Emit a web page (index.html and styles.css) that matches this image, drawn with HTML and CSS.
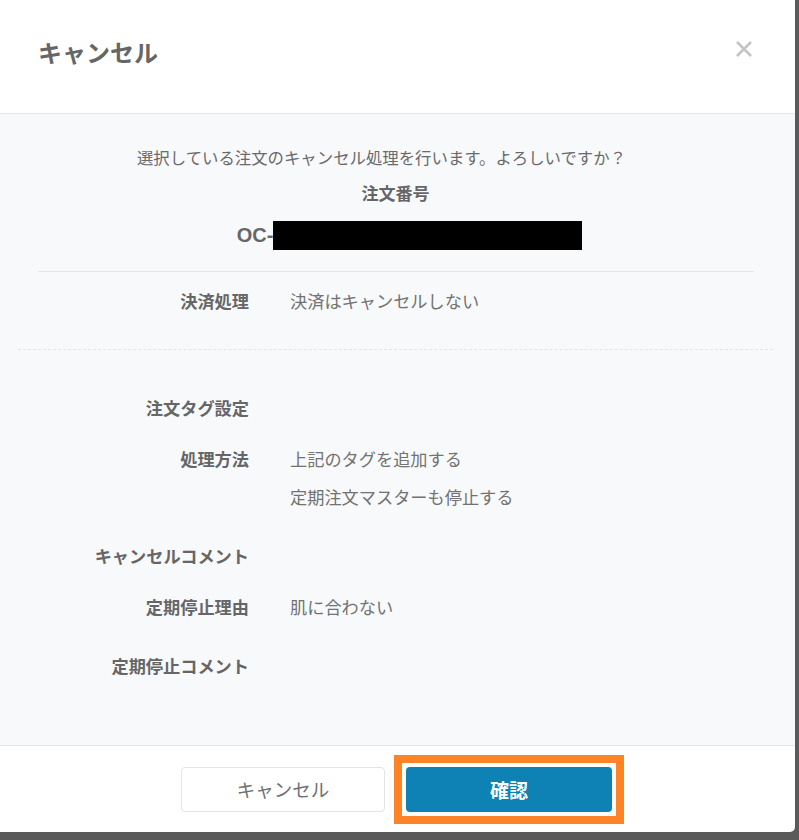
FILE: index.html
```html
<!DOCTYPE html>
<html lang="ja">
<head>
<meta charset="utf-8">
<link rel="stylesheet" href="styles.css">
</head>
<body>
<div class="modal">
  <header class="modal-header">
    <h1 class="modal-title">キャンセル</h1>
    <button class="close" aria-label="close">
      <svg width="18" height="18" viewBox="0 0 18 18"><path d="M2 2 L16 16 M16 2 L2 16" stroke="#c4c4c4" stroke-width="2.6" stroke-linecap="butt"/></svg>
    </button>
  </header>
  <main class="modal-body">
    <p class="lead">選択している注文のキャンセル処理を行います。よろしいですか？</p>
    <p class="order-label">注文番号</p>
    <div class="order-no"><span class="oc">OC-</span><span class="redact"></span></div>
    <hr class="solid">
    <div class="row first">
      <div class="label">決済処理</div>
      <div class="value">決済はキャンセルしない</div>
    </div>
    <hr class="dashed">
    <div class="row">
      <div class="label">注文タグ設定</div>
      <div class="value"></div>
    </div>
    <div class="row">
      <div class="label">処理方法</div>
      <div class="value filled"><div>上記のタグを追加する</div><div>定期注文マスターも停止する</div></div>
    </div>
    <div class="row">
      <div class="label">キャンセルコメント</div>
      <div class="value"></div>
    </div>
    <div class="row">
      <div class="label">定期停止理由</div>
      <div class="value filled">肌に合わない</div>
    </div>
    <div class="row">
      <div class="label">定期停止コメント</div>
      <div class="value"></div>
    </div>
  </main>
  <footer class="modal-footer">
    <button class="btn btn-default">キャンセル</button>
    <span class="highlight"><button class="btn btn-primary">確認</button></span>
  </footer>
</div>
</body>
</html>
```
FILE: styles.css
```css
* { box-sizing: border-box; }
html, body { margin: 0; padding: 0; }
body {
  width: 799px;
  height: 840px;
  background: #5a5a5a;
  font-family: "Noto Sans CJK JP", "Noto Sans", sans-serif;
  color: #666;
  overflow: hidden;
}
.modal {
  width: 795px;
  height: 832px;
  background: #fff;
  border-bottom-right-radius: 5px;
  display: flex;
  flex-direction: column;
  overflow: hidden;
}
.modal-header {
  height: 114px;
  flex: none;
  border-bottom: 1px solid #e3e5e8;
  display: flex;
  align-items: flex-start;
  justify-content: space-between;
  padding: 34px 42px 0 38px;
}
.modal-title {
  margin: 0;
  font-size: 24px;
  line-height: 36px;
  font-weight: bold;
  color: #666;
}
.close {
  border: 0;
  background: none;
  padding: 0;
  margin-top: 6px;
  width: 18px;
  height: 18px;
  display: block;
}
.close svg { display: block; }
.modal-body {
  flex: 1;
  background: #f8f9fb;
  padding: 31px 22px 0 18px;
  border-bottom: 1px solid #e3e5e8;
}
.lead {
  margin: 0;
  padding-right: 28px;
  text-align: center;
  font-size: 16.4px;
  line-height: 24px;
  color: #6a6a6a;
}
.order-label {
  margin: 12px 0 0;
  text-align: center;
  font-size: 17px;
  line-height: 24px;
  font-weight: bold;
  color: #666;
}
.order-no {
  margin-top: 16px;
  height: 29px;
  display: flex;
  justify-content: center;
  align-items: center;
  padding-left: 28px;
}
.oc {
  font-family: "Liberation Sans", Arial, sans-serif;
  font-weight: bold;
  font-size: 20px;
  color: #666;
}
.redact {
  display: inline-block;
  width: 309px;
  height: 29px;
  background: #000;
}
hr { margin: 0; border: 0; }
.solid {
  margin: 21px 19px 0 20px;
  border-top: 1px solid #e3e5e8;
}
.dashed {
  margin-top: 29px;
  border-top: 1px dashed #e3e5e8;
}
.row {
  display: grid;
  grid-template-columns: 231px 1fr;
  column-gap: 41px;
  margin-top: 13px;
  font-size: 17.2px;
  line-height: 38px;
}
.row.first { margin-top: 10px; }
.dashed + .row { margin-top: 39px; }
.label {
  text-align: right;
  font-weight: bold;
  color: #666;
}
.value { color: #727272; }
.value.filled { padding-bottom: 8px; }
.modal-footer {
  height: 86px;
  flex: none;
  display: flex;
  align-items: center;
  justify-content: center;
  padding-left: 10px;
  gap: 9px;
}
.btn {
  font-family: "Noto Sans CJK JP", sans-serif;
  height: 45px;
  border-radius: 4px;
  display: block;
}
.btn-default {
  width: 204px;
  font-size: 18.5px;
  background: #fff;
  border: 1px solid #e2e4e7;
  color: #707070;
}
.highlight {
  display: block;
  border: 8px solid #fd8426;
  padding: 4px;
  background: #fff;
}
.btn-primary {
  width: 206px;
  font-size: 19px;
  background: #0e82b4;
  border: 0;
  color: #fff;
  font-weight: bold;
}
```
